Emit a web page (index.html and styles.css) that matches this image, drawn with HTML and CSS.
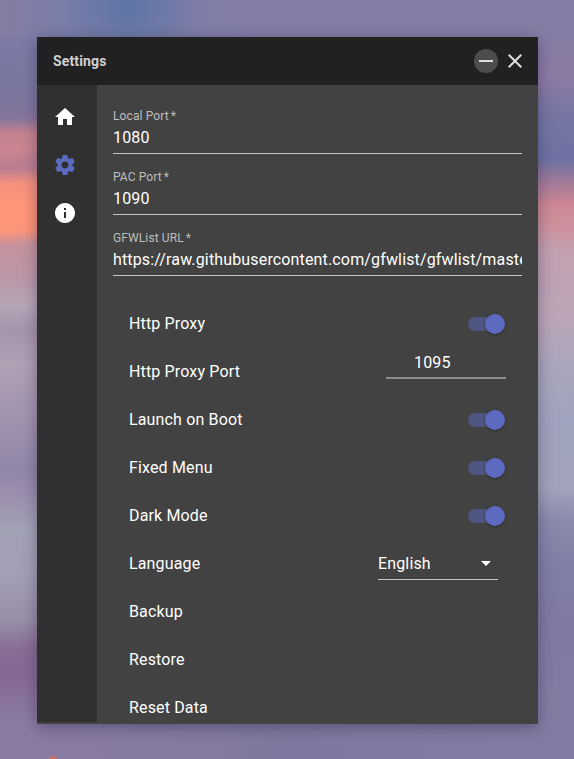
FILE: index.html
```html
<!DOCTYPE html>
<html lang="en">
<head>
<meta charset="utf-8">
<title>Settings</title>
<link rel="stylesheet" href="styles.css">
</head>
<body>
<div class="window">
  <header class="titlebar">
    <h1 class="title">Settings</h1>
    <button class="win-btn minimize" aria-label="Minimize"><svg width="24" height="24" viewBox="0 0 24 24"><path d="M5 11h14v2H5z"/></svg></button>
    <button class="win-btn" aria-label="Close"><svg width="24" height="24" viewBox="0 0 24 24"><path d="M19 6.41L17.59 5 12 10.59 6.41 5 5 6.41 10.59 12 5 17.59 6.41 19 12 13.41 17.59 19 19 17.59 13.41 12z"/></svg></button>
  </header>
  <div class="body">
    <nav class="sidebar">
      <a class="nav-item"><svg width="24" height="24" viewBox="0 0 24 24"><path d="M10 20v-6h4v6h5v-8h3L12 3 2 12h3v8z"/></svg></a>
      <a class="nav-item active"><svg width="24" height="24" viewBox="0 0 24 24"><path d="M19.43 12.98c.04-.32.07-.64.07-.98s-.03-.66-.07-.98l2.11-1.65c.19-.15.24-.42.12-.64l-2-3.46c-.12-.22-.39-.3-.61-.22l-2.49 1c-.52-.4-1.08-.73-1.69-.98l-.38-2.65C14.46 2.18 14.25 2 14 2h-4c-.25 0-.46.18-.49.42l-.38 2.65c-.61.25-1.17.59-1.69.98l-2.49-1c-.23-.09-.49 0-.61.22l-2 3.46c-.13.22-.07.49.12.64l2.11 1.65c-.04.32-.07.65-.07.98s.03.66.07.98l-2.11 1.65c-.19.15-.24.42-.12.64l2 3.46c.12.22.39.3.61.22l2.49-1c.52.4 1.08.73 1.69.98l.38 2.65c.03.24.24.42.49.42h4c.25 0 .46-.18.49-.42l.38-2.65c.61-.25 1.17-.59 1.69-.98l2.49 1c.23.09.49 0 .61-.22l2-3.46c.12-.22.07-.49-.12-.64l-2.11-1.65zM12 15.5c-1.93 0-3.5-1.57-3.5-3.5s1.57-3.5 3.5-3.5 3.5 1.57 3.5 3.5-1.57 3.5-3.5 3.5z"/></svg></a>
      <a class="nav-item"><svg width="24" height="24" viewBox="0 0 24 24"><path d="M12 2C6.48 2 2 6.48 2 12s4.48 10 10 10 10-4.48 10-10S17.52 2 12 2zm1 15h-2v-6h2v6zm0-8h-2V7h2v2z"/></svg></a>
    </nav>
    <main class="content">
      <div class="field"><span class="label">Local Port<i>*</i></span><span class="value">1080</span></div>
      <div class="field"><span class="label">PAC Port<i>*</i></span><span class="value">1090</span></div>
      <div class="field"><span class="label">GFWList URL<i>*</i></span><span class="value">https://raw.githubusercontent.com/gfwlist/gfwlist/maste</span></div>
      <ul class="list">
        <li>Http Proxy<span class="switch"></span></li>
        <li>Http Proxy Port<span class="port">1095</span></li>
        <li>Launch on Boot<span class="switch"></span></li>
        <li>Fixed Menu<span class="switch"></span></li>
        <li>Dark Mode<span class="switch"></span></li>
        <li>Language<span class="select"><span class="option">English</span><svg width="24" height="24" viewBox="0 0 24 24"><path d="M7 10l5 5 5-5z"/></svg></span></li>
        <li>Backup</li>
        <li>Restore</li>
        <li>Reset Data</li>
      </ul>
    </main>
  </div>
</div>
</body>
</html>
```
FILE: styles.css
```css
* { box-sizing: border-box; }
body {
  margin: 0;
  height: 759px;
  padding: 37px 36px 35px 37px;
  overflow: hidden;
  font: 16px/24px Roboto, "Liberation Sans", sans-serif;
  letter-spacing: 0.15px;
  color: #fff;
  background:
    radial-gradient(circle at 53px 762px, #d9705f 0 4px, transparent 7px),
    radial-gradient(ellipse 70px 60px at 128px 8px, #5f75a5, transparent),
    linear-gradient(90deg, #857ca3, #7a7da8 60px, #7c7da8 170px, #857da5 280px, #857da5) 0 0 / 100% 37px no-repeat,
    linear-gradient(90deg, #8b7ba2, #8078a0 50%, #837ba3) 0 100% / 100% 35px no-repeat,
    linear-gradient(178deg, #857ca5 0, #7b7ba5 40px, #7a77a0 90px, #85749c 118px, #c4828e 134px, #c98590 150px, #b97e91 168px, #f5907e 184px, #ff967a 205px, #ff967a 230px, #c6929e 246px, #ba98a8 280px, #b5a6b7 305px, #a694ac 330px, #b0a0b4 365px, #a193ae 420px, #9187a8 470px, #9a8cac 490px, #a2a2b5 530px, #a39fb4 575px, #988fa8 620px, #896b93 650px, #866a94 680px, #8b7ba2 720px) 0 0 / 50% 100% no-repeat,
    linear-gradient(181deg, #857da5 0, #857da5 37px, #8c7aa5 80px, #7676a3 115px, #6e72a2 160px, #a07a9a 182px, #cd8793 205px, #cd939f 230px, #c2a0b0 250px, #bba5b8 320px, #a9a6bc 370px, #9fa3bd 420px, #a0a3ba 490px, #8b8aac 520px, #827fa7 560px, #7e7aa2 620px, #837ba3 700px) 100% 0 / 50% 100% no-repeat;
}
h1, ul { margin: 0; padding: 0; }
svg { display: block; fill: currentColor; }
.window {
  height: 687px;
  display: flex;
  flex-direction: column;
  background: #424242;
  box-shadow: 0 3px 14px rgba(30, 25, 60, .4);
}
.titlebar {
  height: 48px;
  flex: none;
  display: flex;
  align-items: center;
  gap: 5px;
  padding: 0 11px 0 16px;
  background: #212121;
  color: #dedede;
}
.title { flex: 1; font-size: 14px; font-weight: 700; color: #d0d0d0; }
.win-btn {
  width: 24px;
  height: 24px;
  padding: 0;
  border: 0;
  border-radius: 50%;
  background: none;
  color: inherit;
}
.minimize { background: #4d4d4d; }
.body { flex: 1; min-height: 0; display: flex; }
.sidebar { width: 60px; margin-bottom: 2px; padding-top: 8px; background: #303030; }
.nav-item { display: flex; align-items: center; height: 48px; padding-left: 16px; }
.active { color: #5c6bc0; }
.content { flex: 1; min-width: 0; overflow: hidden; padding: 21px 16px 0; }
.field {
  height: 48px;
  margin-bottom: 13px;
  border-bottom: 1px solid #c6c6c6;
}
.label {
  display: block;
  height: 20px;
  font-size: 12px;
  line-height: 20px;
  letter-spacing: 0.11px;
  color: #bebebe;
}
.label i { font-style: normal; margin-left: 2px; }
.value { display: block; overflow: hidden; white-space: nowrap; }
.list { list-style: none; padding-top: 11px; }
.list li {
  height: 48px;
  padding: 0 16px;
  display: flex;
  align-items: center;
  justify-content: space-between;
}
.switch {
  width: 34px;
  height: 14px;
  margin-right: 4px;
  display: flex;
  align-items: center;
  justify-content: flex-end;
  border-radius: 7px;
  background: #4f5681;
}
.switch::after {
  content: "";
  flex: none;
  width: 20px;
  height: 20px;
  margin-right: -3px;
  border-radius: 50%;
  background: #5c6bc0;
  box-shadow: 0 1px 3px rgba(0, 0, 0, .4);
}
.port {
  width: 120px;
  height: 32px;
  margin-bottom: 18px;
  padding: 4px 0 0 28px;
  border-bottom: 2px solid #8c8c8c;
}
.select {
  width: 120px;
  height: 32px;
  margin-right: 8px;
  display: flex;
  justify-content: space-between;
  padding-top: 3px;
  border-bottom: 1px solid #c6c6c6;
}
.option { padding-top: 1px; }
```
